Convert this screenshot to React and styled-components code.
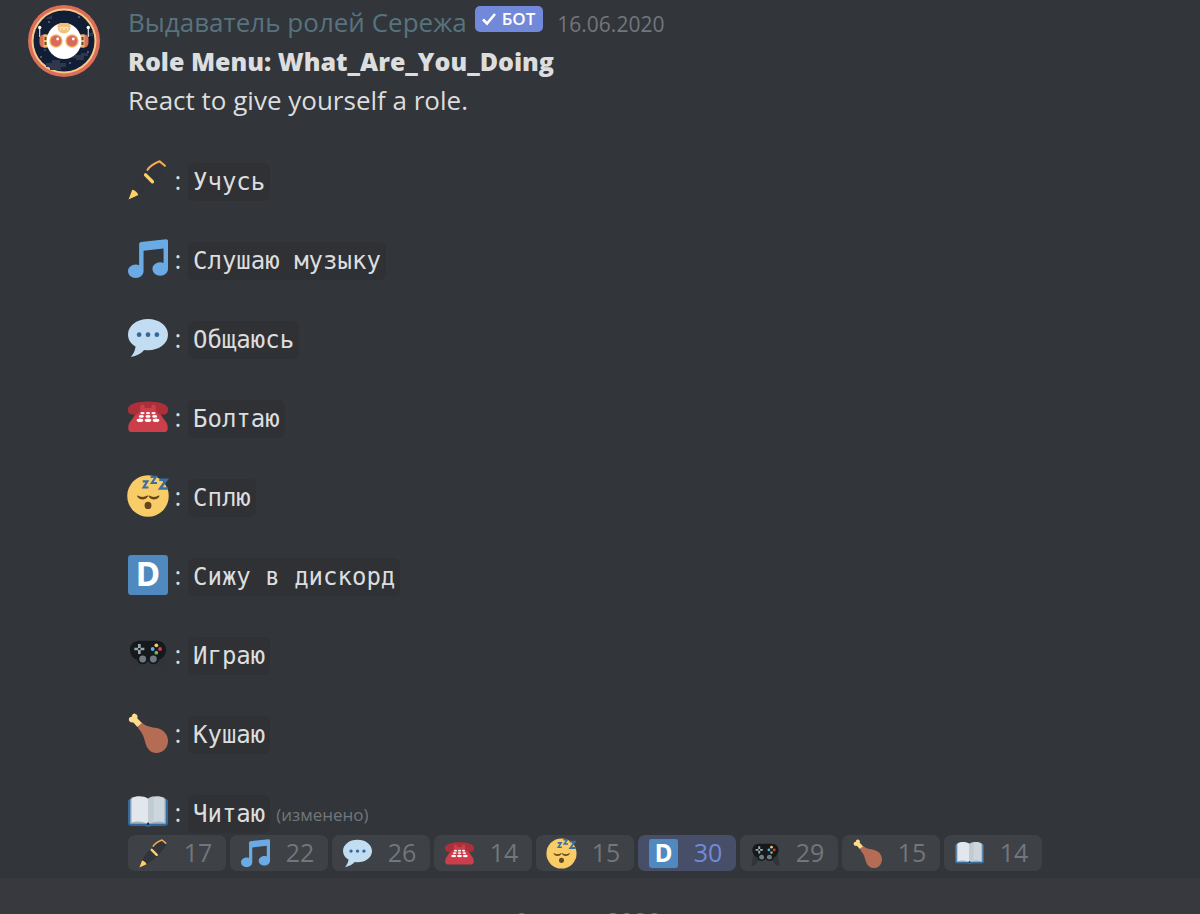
import React from "react";
import styled, { createGlobalStyle } from "styled-components";

const GlobalStyle = createGlobalStyle`
  * {
    box-sizing: border-box;
  }
  html, body {
    margin: 0;
    height: 100%;
    overflow: hidden;
    background-color: #37393e;
  }
  body {
    font-family: "Open Sans", "Noto Sans", sans-serif;
    color: #dcddde;
  }
`;

const Message = styled.article`
  display: flex;
  gap: 28px;
  padding: 2px 28px 7px 28px;
  background-color: #323539;
`;

const Avatar = styled.svg`
  flex: none;
  width: 72px;
  height: 72px;
  margin-top: 3px;
`;

const Body = styled.div`
  flex: 1;
  min-width: 0;
`;

const Header = styled.header`
  display: flex;
  align-items: baseline;
  height: 40px;
  line-height: 40px;
`;

const Author = styled.span`
  font-size: 26px;
  font-weight: 500;
  color: #587380;
`;

const BotTag = styled.span`
  display: flex;
  align-items: center;
  align-self: flex-start;
  gap: 5px;
  height: 26px;
  margin: 4px 14px 0 8px;
  padding: 0 8px 0 6px;
  border-radius: 5px;
  font-size: 17px;
  font-weight: 600;
  line-height: 26px;
  color: #ffffff;
  background-color: #7289da;
`;

const SentAt = styled.time`
  font-size: 21px;
  color: #72767d;
`;

const Title = styled.h1`
  margin: 0;
  font-size: 25px;
  font-weight: 800;
  line-height: 39px;
`;

const Description = styled.p`
  margin: 0;
  font-size: 26px;
  line-height: 39px;
`;

const Emoji = styled.svg`
  flex: none;
  display: block;
  width: ${(props) => props.$size}px;
  height: ${(props) => props.$size}px;
  overflow: visible;
`;

const RoleList = styled.ul`
  display: flex;
  flex-direction: column;
  gap: 41px;
  margin: 43px 0 2px;
  padding: 0;
  list-style: none;
`;

const RoleItem = styled.li`
  display: flex;
  align-items: center;
  height: 38px;
  font-size: 26px;

  ${Emoji} {
    margin-bottom: 5px;
  }
`;

const Colon = styled.span`
  width: 20px;
  padding-bottom: 4px;
  text-align: center;
`;

const RoleName = styled.code`
  height: 38px;
  padding: 0 5px;
  border-radius: 6px;
  font-family: "DejaVu Sans Mono", monospace;
  font-size: 24px;
  line-height: 38px;
  background-color: #2f3135;
`;

const Edited = styled.span`
  margin-left: 6px;
  font-size: 17px;
  color: #72767d;
`;

const Reactions = styled.div`
  display: flex;
  flex-wrap: wrap;
  gap: 4px;
`;

const Reaction = styled.button`
  display: flex;
  align-items: center;
  width: 98px;
  height: 36px;
  padding: 0 0 0 11px;
  border: none;
  border-radius: 7px;
  font-family: inherit;
  font-size: 25px;
  color: ${(props) => (props.$active ? "#7289da" : "#72767d")};
  background-color: ${(props) => (props.$active ? "#474e68" : "#3e4145")};
  cursor: pointer;
`;

const Count = styled.span`
  flex: 1;
  padding: 0 0 2px 2px;
  text-align: center;
`;

const Divider = styled.div`
  padding-top: 25px;
  text-align: center;
  font-size: 24px;
  font-weight: 600;
  line-height: 36px;
  color: #72767d;
`;

const Pen = () => (
  <>
    <path fill="#313539" d="M4.2 26.500C7 20 10 16 15 12l11-9.500c2-1.500 4-1 5.500.500s3 4 1.500 6L23.500 20.500C19 25 15 28 9 31z" />
    <path fill="#ffd065" d="M.500 35.500L3.800 26.800c2.300.200 4.500 2.200 5.500 4.600z" />
    <path fill="none" stroke="#ffd065" strokeWidth="3" strokeLinecap="round" d="M15.800 13.400l6.200 6.200" />
    <path fill="none" stroke="#f4aa50" strokeWidth="1.900" strokeLinecap="round" strokeLinejoin="round" d="M17.600 8.800C19.500 5.800 24 3 28.500 1.200L33.200 5.200" />
  </>
);

const Music = () => (
  <path
    fill="#6aabe6"
    d="M34.209.206L11.791 2.793C10.806 2.907 10 3.811 10 4.803v18.782C9.090 23.214 8.075 23 7 23c-3.865 0-7 2.685-7 6s3.135 6 7 6 7-2.686 7-6V10.539l18-2.077v13.124c-.910-.372-1.925-.586-3-.586-3.865 0-7 2.685-7 6s3.135 6 7 6 7-2.686 7-6V1.803c0-.992-.806-1.710-1.791-1.597z"
  />
);

const Speech = () => (
  <>
    <path fill="#c2dcf2" d="M18 1C8 1 0 7 0 15c0 4.400 2.600 8.300 6.800 10.600C6.500 29 5 32 2.500 35c5-.800 9.500-3.200 12-6.300 1.200.200 2.300.300 3.500.300 10 0 18-6 18-14S28 1 18 1z" />
    <circle fill="#35689a" cx="10" cy="15" r="2.100" />
    <circle fill="#35689a" cx="18" cy="15" r="2.100" />
    <circle fill="#35689a" cx="26" cy="15" r="2.100" />
  </>
);

const Telephone = () => (
  <>
    <path fill="#cc3f4a" d="M26 11c-1-1.500-3-2-4-2h-8c-1 0-3 .500-4 2L1.500 23C.700 24.300.300 25.500.300 27v1.500c0 2 1.300 3 3.200 3h29c1.900 0 3.200-1 3.200-3V27c0-1.500-.400-2.700-1.200-4z" />
    <path fill="#ad2f39" d="M36 10.500C36 6.500 28 4 18 4S0 6.500 0 10.500v1.300C0 15 2.300 16 5 16c3 0 4.500-1.200 6-3.500 1-1.500 2.500-2.500 4-2.500h6c1.500 0 3 1 4 2.500 1.500 2.300 3 3.500 6 3.500 2.700 0 5-1 5-4.200z" />
    <path fill="#cc3f4a" d="M11 9c0-3 4-3 4 0v3h-4zM21 9c0-3 4-3 4 0v3h-4z" />
    <g fill="#ffffff">
      <ellipse cx="13" cy="14.500" rx="1.900" ry="1.100" />
      <ellipse cx="18" cy="14.500" rx="1.900" ry="1.100" />
      <ellipse cx="23" cy="14.500" rx="1.900" ry="1.100" />
      <ellipse cx="12" cy="17.500" rx="2.300" ry="1.200" />
      <ellipse cx="18" cy="17.500" rx="2.300" ry="1.200" />
      <ellipse cx="24" cy="17.500" rx="2.300" ry="1.200" />
      <ellipse cx="10.800" cy="21" rx="3" ry="1.600" />
      <ellipse cx="18" cy="21" rx="3" ry="1.600" />
      <ellipse cx="25.200" cy="21" rx="3" ry="1.600" />
    </g>
  </>
);

const Sleeping = () => (
  <>
    <circle fill="#f8cc66" cx="18" cy="18" r="18.700" />
    <path fill="#65471b" d="M9 17.600c2 1.600 6 1.600 8.200 0 .600-.300 1 .200.700.800-1.900 3.600-7.700 3.600-9.600 0-.200-.600.200-1.100.700-.800zM19.300 17.600c2 1.600 6 1.600 8.200 0 .600-.300 1 .200.700.800-1.900 3.600-7.700 3.600-9.600 0-.200-.600.200-1.100.700-.800z" />
    <ellipse fill="#65471b" cx="18" cy="26.500" rx="3.100" ry="3.300" />
    <g fill="none" stroke="#3b6fa4" strokeWidth="1.900" strokeLinejoin="miter">
      <path d="M13.300 4.800h4.200L14 10.300h4.400" />
      <path d="M20.300.800h4.800L21.500 6.300h4.600" />
      <path strokeWidth="2.300" d="M28.200 3.300h6.500L29 11.200h6.800" />
    </g>
  </>
);

const LetterD = () => (
  <>
    <rect fill="#5089bf" width="36" height="36" rx="3" />
    <text x="18" y="28" textAnchor="middle" fill="#ffffff" fontFamily="'Noto Sans', sans-serif" fontWeight="700" fontSize="30">
      D
    </text>
  </>
);

const Gamepad = () => (
  <>
    <path fill="#313539" d="M3 20L.500 32c.500 1.500 3 1.500 4.500 0l7-8zM33 20l2.500 12c-.500 1.500-3 1.500-4.500 0l-7-8z" />
    <path fill="#15191c" d="M10 6h16c5 0 8.300 3.500 8.300 8S31 22.500 28 23c-.500 2.500-2.500 4.300-5 4.300-2.200 0-4-1.200-5-3-1 1.800-2.800 3-5 3-2.500 0-4.500-1.800-5-4.300-3-.500-6.300-4.500-6.300-9S5 6 10 6z" />
    <circle fill="#707a84" cx="13.200" cy="22.500" r="3.100" />
    <circle fill="#707a84" cx="22.800" cy="22.500" r="3.100" />
    <path stroke="#9aa8b3" strokeWidth="2.400" d="M10.200 9v3.500M10.200 14.500V18M5.700 13.500h3.500M11.200 13.500h3.500" />
    <circle fill="#f8c85c" cx="25.500" cy="10.200" r="1.700" />
    <circle fill="#5dadec" cx="22.200" cy="13.500" r="1.700" />
    <circle fill="#d83c48" cx="28.800" cy="13.500" r="1.700" />
    <circle fill="#7fae5c" cx="25.500" cy="16.800" r="1.700" />
  </>
);

const Drumstick = () => (
  <>
    <path fill="#ffdb8c" d="M8.500 12.500L4.800 8.500C2.500 9 .300 7.500.800 5.200 1 4 2.200 3.500 3.300 3.700 3.400 1.500 4.800.300 6.300.600c2.200.400 2.800 2.600 2 4.200L13 9.500z" />
    <path fill="#b56c55" d="M9 12.200l3.700-3.500C17 12.500 21 12.500 26 13.500c6 1.300 10 6 10 11.500 0 6.500-4.500 11-10.500 11-5 0-8.300-3.500-9.800-9-1.200-4.600-2.200-8.300-5.700-12.200-.500-.600-1-1.400-1-2.600z" />
  </>
);

const Book = () => (
  <>
    <path fill="#356a9c" d="M2 6.500h32c1.200 0 2 .800 2 2V28c0 1.500-.800 2.500-2.500 2.500H21c-.500 1-5.500 1-6 0H2.500C.800 30.500 0 29.500 0 28V8.500c0-1.200.800-2 2-2z" />
    <path fill="#9fb0c0" d="M2 6h32v22.500H2z" />
    <path fill="#e2e6ed" d="M18 6C14 3 7 3.500 3.200 5.200v22.300C8 26 14 26.500 18 29z" />
    <path fill="#cdd5dd" d="M18 6c4-3 11-2.500 14.800-.800v22.300C28 26 22 26.500 18 29z" />
    <path fill="#b6c1cc" d="M18 6c2-1.500 3.500-2 5-2.200V26c-2 .400-3.500 1.200-5 2.800z" opacity=".5" />
    <circle fill="#292f33" cx="18" cy="28.500" r="1.100" />
  </>
);

const RobotAvatar = () => (
  <Avatar viewBox="0 0 72 72" role="img" aria-label="Выдаватель ролей Сережа">
    <circle fill="#dd6e59" cx="36" cy="36" r="36" />
    <circle fill="#f6ca86" cx="36" cy="36" r="32.500" />
    <circle fill="#121e36" cx="36" cy="36" r="30.500" />
    <g fill="#2f374d">
      <path d="M18 58h6v-3h8v3h6v4h-5v3H22v-3h-4zM47 50h6v-2h7v3h-4v4h-8v-2h-4zM57 30l8-3v4h-5v5h-3zM17 14l7-4v4z" />
    </g>
    <g fill="#b9bfca">
      <circle cx="21" cy="17" r=".700" />
      <circle cx="13" cy="52" r=".700" />
      <circle cx="42" cy="58" r=".700" />
      <circle cx="51" cy="12" r=".700" />
      <circle cx="60" cy="47" r=".700" />
      <circle cx="17" cy="45" r=".600" />
    </g>
    <path stroke="#d9dbe0" strokeWidth="1.200" d="M11.700 23v9M60.300 23v9" />
    <circle fill="#ffffff" cx="11.700" cy="22.500" r="1.700" />
    <circle fill="#ffffff" cx="60.300" cy="22.500" r="1.700" />
    <rect fill="#dd6e59" x="11.500" y="29.500" width="10" height="13" rx="4.500" />
    <rect fill="#dd6e59" x="50.500" y="29.500" width="10" height="13" rx="4.500" />
    <path fill="#f0bb6c" d="M15.500 29.500h5v13h-5zM51.500 29.500h5v13h-5z" />
    <path stroke="#5b4a35" strokeWidth="2" d="M17.500 32v3M17.500 37v3M54.500 32v3M54.500 37v3" />
    <ellipse fill="#ffffff" cx="36" cy="36" rx="17.300" ry="18" />
    <path fill="#f0c27b" d="M29.500 19.500c4-2 9-2 13 0 .500 5-2 9-6.500 9s-7-4-6.500-9z" />
    <path fill="none" stroke="#fae3ba" strokeWidth="1.200" d="M32.500 25v-2.500h3V25M36.500 25v-2.500h3V25" />
    <circle fill="#f0bb6c" cx="28" cy="36" r="6.700" />
    <circle fill="#f0bb6c" cx="44" cy="36" r="6.700" />
    <circle fill="#d9695a" cx="28" cy="36" r="5.400" />
    <circle fill="#d9695a" cx="44" cy="36" r="5.400" />
    <circle fill="#ffffff" cx="29.700" cy="34" r="1.400" />
    <circle fill="#ffffff" cx="45.300" cy="34" r="1.400" />
  </Avatar>
);

const roles = [
  { name: "Учусь", icon: Pen, count: 17 },
  { name: "Слушаю музыку", icon: Music, count: 22 },
  { name: "Общаюсь", icon: Speech, count: 26 },
  { name: "Болтаю", icon: Telephone, count: 14 },
  { name: "Сплю", icon: Sleeping, count: 15 },
  { name: "Сижу в дискорд", icon: LetterD, count: 30, active: true },
  { name: "Играю", icon: Gamepad, count: 29 },
  { name: "Кушаю", icon: Drumstick, count: 15 },
  { name: "Читаю", icon: Book, count: 14, edited: true },
];

function App() {
  return (
    <main>
      <GlobalStyle />
      <Message>
        <RobotAvatar />
        <Body>
          <Header>
            <Author>Выдаватель ролей Сережа</Author>
            <BotTag>
              <svg width="16" height="16" viewBox="0 0 16 16" aria-hidden="true">
                <path d="M2 8.500l4 4L14 3" fill="none" stroke="#ffffff" strokeWidth="2.600" />
              </svg>
              БОТ
            </BotTag>
            <SentAt dateTime="2020-06-16">16.06.2020</SentAt>
          </Header>
          <Title>Role Menu: What_Are_You_Doing</Title>
          <Description>React to give yourself a role.</Description>
          <RoleList>
            {roles.map(({ name, icon: Icon, edited }) => (
              <RoleItem key={name}>
                <Emoji $size={40} viewBox="0 0 36 36" aria-hidden="true">
                  <Icon />
                </Emoji>
                <Colon>:</Colon>
                <RoleName>{name}</RoleName>
                {edited && <Edited>(изменено)</Edited>}
              </RoleItem>
            ))}
          </RoleList>
          <Reactions>
            {roles.map(({ name, icon: Icon, count, active }) => (
              <Reaction key={name} type="button" $active={active} aria-pressed={!!active} aria-label={`${name}: ${count}`}>
                <Emoji $size={29} viewBox="0 0 36 36" aria-hidden="true">
                  <Icon />
                </Emoji>
                <Count>{count}</Count>
              </Reaction>
            ))}
          </Reactions>
        </Body>
      </Message>
      <Divider>9 июля 2020 г.</Divider>
    </main>
  );
}

export default App;
